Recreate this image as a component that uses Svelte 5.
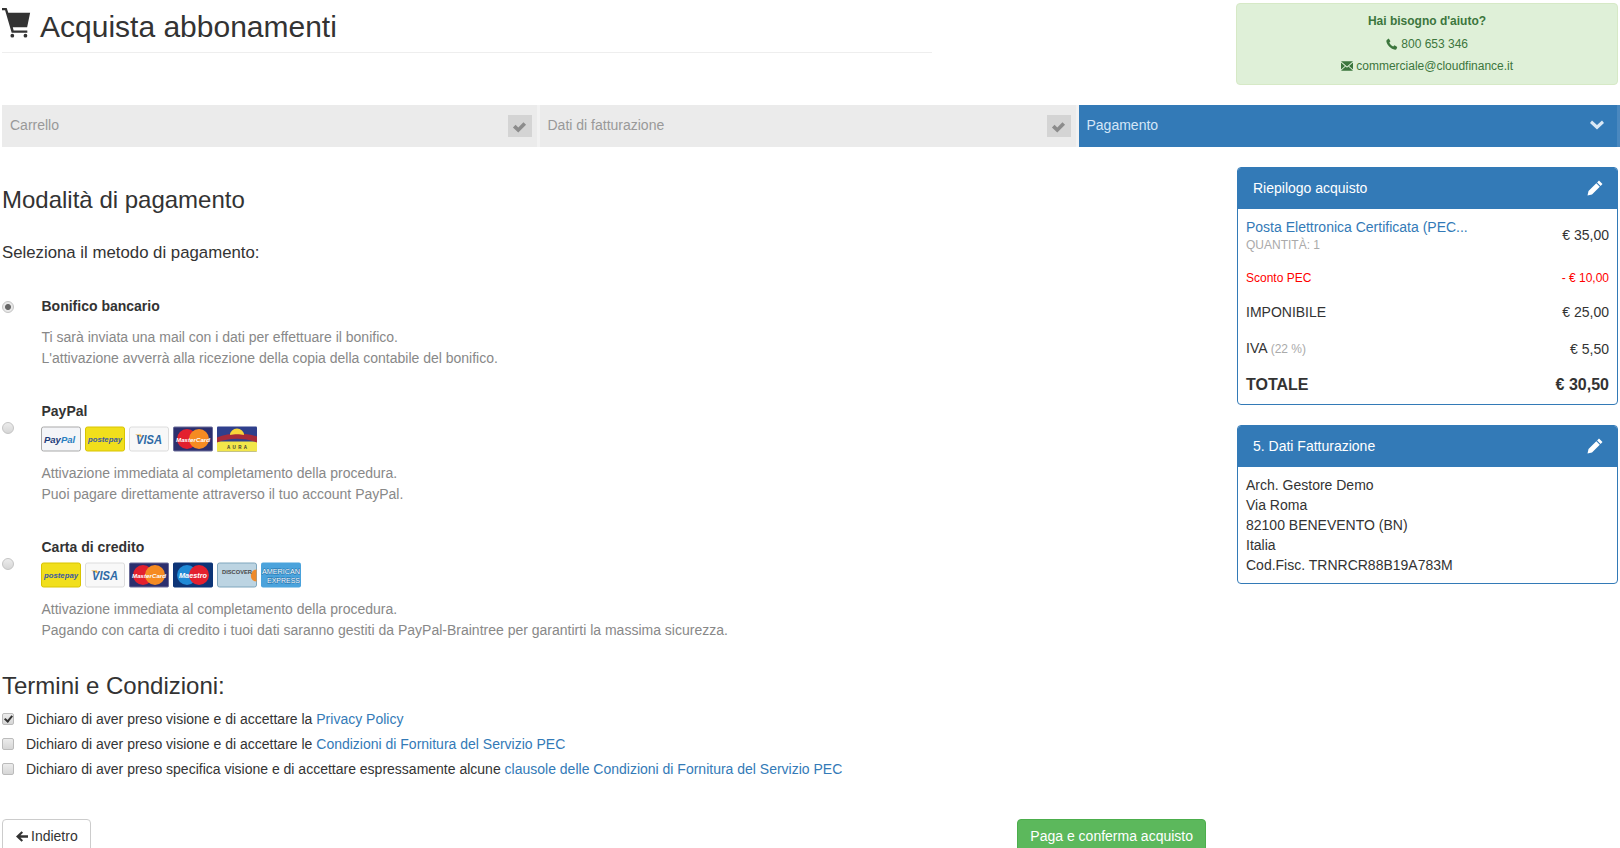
<script>
  const steps = [
    { label: "Carrello", done: true },
    { label: "Dati di fatturazione", done: true },
    { label: "Pagamento", done: false }
  ];

  const methods = [
    {
      name: "Bonifico bancario",
      checked: true,
      cards: [],
      lines: [
        "Ti sarà inviata una mail con i dati per effettuare il bonifico.",
        "L'attivazione avverrà alla ricezione della copia della contabile del bonifico."
      ]
    },
    {
      name: "PayPal",
      checked: false,
      cards: ["paypal", "postepay", "visa", "mastercard", "aura"],
      lines: [
        "Attivazione immediata al completamento della procedura.",
        "Puoi pagare direttamente attraverso il tuo account PayPal."
      ]
    },
    {
      name: "Carta di credito",
      checked: false,
      cards: ["postepay", "visa", "mastercard", "maestro", "discover", "amex"],
      lines: [
        "Attivazione immediata al completamento della procedura.",
        "Pagando con carta di credito i tuoi dati saranno gestiti da PayPal-Braintree per garantirti la massima sicurezza."
      ]
    }
  ];

  const terms = [
    { before: "Dichiaro di aver preso visione e di accettare la ", link: "Privacy Policy", checked: true },
    { before: "Dichiaro di aver preso visione e di accettare le ", link: "Condizioni di Fornitura del Servizio PEC", checked: false },
    { before: "Dichiaro di aver preso specifica visione e di accettare espressamente alcune ", link: "clausole delle Condizioni di Fornitura del Servizio PEC", checked: false }
  ];

  const billing = [
    "Arch. Gestore Demo",
    "Via Roma",
    "82100 BENEVENTO (BN)",
    "Italia",
    "Cod.Fisc. TRNRCR88B19A783M"
  ];
</script>

{#snippet check()}
  <svg class="ico" viewBox="0 0 16 16"><path d="M1 9l2.800-2.800 2.900 2.900 5.500-5.700L15 6.200l-8.300 8.300z" fill="currentColor" /></svg>
{/snippet}

{#snippet pencil()}
  <svg class="pencil" viewBox="0 0 16 16"><path d="M12 .5l3.500 3.500-1.900 1.900-3.500-3.500zM9.300 3.200l3.500 3.500-7.800 7.800-4.500 1 1-4.500z" fill="currentColor" /></svg>
{/snippet}

{#snippet card(kind)}
  <svg class="card" viewBox="0 0 40 25">
    {#if kind === "paypal"}
      <rect x=".5" y=".5" width="39" height="24" rx="2" fill="#f4f5f8" stroke="#a9a9a9" />
      <text x="3" y="16" class="ct" fill="#1d3b78" font-size="9.500">Pay<tspan fill="#2a7fc0">Pal</tspan></text>
    {:else if kind === "postepay"}
      <rect x=".5" y=".5" width="39" height="24" rx="2" fill="#f1df1c" stroke="#d9c400" />
      <text x="3" y="15.500" class="cp" fill="#3c5aa0" font-size="8" textLength="34" lengthAdjust="spacingAndGlyphs">postepay</text>
    {:else if kind === "visa"}
      <rect x=".5" y=".5" width="39" height="24" rx="2" fill="#f8f8f8" stroke="#dcdcdc" />
      <path d="M6 8h6l1 3z" fill="#e8a73a" />
      <text x="7" y="17.500" class="ct" fill="#2f6aa5" font-size="12" textLength="26" lengthAdjust="spacingAndGlyphs">VISA</text>
    {:else if kind === "mastercard"}
      <rect x=".5" y=".5" width="39" height="24" rx="1" fill="#2c2f6e" stroke="#6a6c98" />
      <circle cx="14" cy="12.500" r="10" fill="#e3202e" />
      <circle cx="26" cy="12.500" r="10" fill="#f58b22" />
      <text x="3" y="15" class="ct" fill="#fff" font-size="6.200" textLength="34" lengthAdjust="spacingAndGlyphs">MasterCard</text>
    {:else if kind === "maestro"}
      <rect x=".5" y=".5" width="39" height="24" rx="1" fill="#0d3577" stroke="#0d3577" />
      <circle cx="14" cy="12.500" r="10" fill="#1f8ad6" />
      <circle cx="26" cy="12.500" r="10" fill="#e3202e" />
      <text x="6" y="15.500" class="ct" fill="#fff" font-size="8" textLength="28" lengthAdjust="spacingAndGlyphs">Maestro</text>
    {:else if kind === "aura"}
      <rect width="40" height="25" rx="1" fill="#2f3f8c" />
      <path d="M0 15h40v10H0z" fill="#f2e64a" />
      <path d="M0 16c12-5 28-5 40 0v-6C28 6 12 6 0 11z" fill="#a62b3a" />
      <path d="M13 8.500a7 6.500 0 0 1 14 0c-4-1-10-1-14 0z" fill="#f7d43a" />
      <text x="10" y="22" class="ca" fill="#333" font-size="4.500" textLength="20">AURA</text>
    {:else if kind === "discover"}
      <rect x=".5" y=".5" width="39" height="24" rx="2" fill="#bcd4e2" stroke="#7fa6bd" />
      <path d="M39.500 7c-7 0-8 12 0 12z" fill="#ef8a2a" />
      <text x="5" y="11" class="ca" fill="#4a4a4a" font-size="5" textLength="30" lengthAdjust="spacingAndGlyphs">DISCOVER</text>
    {:else if kind === "amex"}
      <rect width="40" height="25" rx="2" fill="#4ba3dc" />
      <text x="1" y="11" class="cx" fill="#fff" font-size="7" textLength="38" lengthAdjust="spacingAndGlyphs">AMERICAN</text>
      <text x="6" y="20.500" class="cx" fill="#fff" font-size="7" textLength="33" lengthAdjust="spacingAndGlyphs">EXPRESS</text>
    {/if}
  </svg>
{/snippet}

<div class="page">
  <header class="top">
    <h1 class="title">
      <svg class="cart" viewBox="0 0 32 32"><path d="M0 0h5l1.700 5H30l-3.200 15.500H11.500l.9 3.500H27v2.500H10.300L3.300 2.500H0zM11 27.500a2 2 0 1 1 0 4 2 2 0 0 1 0-4zm14 0a2 2 0 1 1 0 4 2 2 0 0 1 0-4z" fill="currentColor" /></svg>
      Acquista abbonamenti
    </h1>
    <aside class="help">
      <strong>Hai bisogno d'aiuto?</strong>
      <span>
        <svg class="tiny" viewBox="0 0 14 14"><path d="M3.200.6l2 3.200-1.300 1.500c.7 2 2.300 3.600 4.500 4.600l1.500-1.300 3.200 2-.8 2.300c-.3.600-1 .9-1.700.8C5.800 12.900 1.200 8.400.4 3.800.300 3 .6 2.300 1.200 1.900z" fill="currentColor" /></svg>
        800 653 346
      </span>
      <span class="mail">
        <svg class="tiny wide" viewBox="0 0 14 11"><path d="M0 0h14L7 6zM0 1.500v8L4.600 5.400zM14 1.500v8L9.400 5.400zM5.400 6.100L7 7.500l1.600-1.400L14 11H0z" fill="currentColor" /></svg>
        commerciale@cloudfinance.it
      </span>
    </aside>
  </header>

  <nav class="steps">
    {#each steps as step}
      <div class="step" class:active={!step.done}>
        <span class="step-label">{step.label}</span>
        {#if step.done}
          <span class="tick">{@render check()}</span>
        {:else}
          <svg class="chev" viewBox="0 0 14 10"><path d="M2 .5l5 4.500 5-4.500 2 2.400-7 6.600-7-6.600z" fill="currentColor" /></svg>
        {/if}
      </div>
    {/each}
  </nav>

  <div class="main">
    <section class="left">
      <h2 class="heading">Modalità di pagamento</h2>
      <p class="lead">Seleziona il metodo di pagamento:</p>

      {#each methods as method}
        <div class="method">
          <input class="radio" type="radio" name="metodo" checked={method.checked} class:low={method.cards.length > 0} />
          <div class="method-body">
            <div class="method-name">{method.name}</div>
            {#if method.cards.length}
              <div class="cards">
                {#each method.cards as kind}
                  {@render card(kind)}
                {/each}
              </div>
            {/if}
            <div class="method-text">
              {#each method.lines as line}
                <div>{line}</div>
              {/each}
            </div>
          </div>
        </div>
      {/each}

      <h2 class="heading terms-title">Termini e Condizioni:</h2>
      {#each terms as term}
        <label class="term">
          <input class="box" type="checkbox" checked={term.checked} />
          <span>{term.before}<a href="#top">{term.link}</a></span>
        </label>
      {/each}

      <div class="actions">
        <button class="btn back">
          <svg class="arrow" viewBox="0 0 14 12"><path d="M6.500 0l1.700 1.700L5.200 4.500H14v3H5.200l3 2.800L6.500 12 0 6z" fill="currentColor" /></svg>
          Indietro
        </button>
        <button class="btn pay">Paga e conferma acquisto</button>
      </div>
    </section>

    <aside class="side">
      <div class="panel">
        <div class="panel-head"><span>Riepilogo acquisto</span>{@render pencil()}</div>
        <div class="summary">
          <div class="row product">
            <div>
              <a class="product-name" href="#top">Posta Elettronica Certificata (PEC...</a>
              <div class="qty">QUANTITÀ: 1</div>
            </div>
            <span class="product-price">€ 35,00</span>
          </div>
          <div class="row discount"><span>Sconto PEC</span><span>- € 10,00</span></div>
          <div class="row taxable"><span>IMPONIBILE</span><span>€ 25,00</span></div>
          <div class="row vat"><span>IVA <small>(22 %)</small></span><span>€ 5,50</span></div>
          <div class="row total"><span>TOTALE</span><span>€ 30,50</span></div>
        </div>
      </div>

      <div class="panel">
        <div class="panel-head"><span>5. Dati Fatturazione</span>{@render pencil()}</div>
        <div class="billing">
          {#each billing as line}
            <div>{line}</div>
          {/each}
        </div>
      </div>
    </aside>
  </div>
</div>

<style>
  :global(body) {
    margin: 0;
    background: #fff;
    overflow: hidden;
  }

  .page {
    height: 848px;
    overflow: hidden;
    padding: 3px 0 0 2px;
    box-sizing: border-box;
    font-family: "Liberation Sans", Arial, sans-serif;
    font-size: 14px;
    line-height: 20px;
    color: #333;
  }

  .top {
    display: flex;
    justify-content: space-between;
    align-items: flex-start;
  }

  .title {
    width: 930px;
    height: 49px;
    margin: 0;
    display: flex;
    align-items: flex-start;
    gap: 8px;
    border-bottom: 1px solid #eee;
    font-size: 30px;
    font-weight: 400;
    line-height: 48px;
  }

  .cart {
    width: 30px;
    height: 30px;
    margin-top: 5px;
    flex: none;
  }

  .help {
    width: 382px;
    height: 82px;
    margin-right: 2px;
    box-sizing: border-box;
    display: flex;
    flex-direction: column;
    align-items: center;
    gap: 2px;
    padding-top: 7px;
    background: #dff0d8;
    border: 1px solid #d6e9c6;
    border-radius: 4px;
    color: #3c763d;
    font-size: 12px;
  }

  .help span {
    margin-top: 1px;
  }

  .help .mail {
    margin-top: 0;
  }

  .tiny {
    width: 12px;
    height: 12px;
    vertical-align: -2px;
  }

  .tiny.wide {
    height: 10px;
    vertical-align: -1px;
  }

  .steps {
    display: flex;
    margin-top: 20px;
    height: 42px;
  }

  .step {
    flex: 0 0 537.500px;
    box-sizing: border-box;
    display: flex;
    align-items: center;
    justify-content: space-between;
    padding: 0 5px 0 8px;
    background: #ebebeb;
    color: #999;
    border-right: 3px solid #f2f2f2;
  }

  .step-label {
    padding-bottom: 2px;
  }

  .step:nth-child(2) {
    flex-basis: 539px;
  }

  .step.active {
    flex: 1 1 0;
    background: #337ab7;
    color: #d3e6f7;
    border-right-color: #4a88bf;
    padding-right: 13px;
  }

  .tick {
    width: 24px;
    height: 22px;
    display: flex;
    align-items: center;
    justify-content: center;
    background: #d4d4d4;
    color: #8c8c8c;
  }

  .ico {
    width: 15px;
    height: 15px;
  }

  .chev {
    width: 14px;
    height: 10px;
    color: #d9e8f5;
    margin-bottom: 3px;
  }

  .main {
    display: flex;
    justify-content: space-between;
    align-items: flex-start;
  }

  .left {
    width: 1204px;
  }

  .heading {
    margin: 0;
    font-size: 24px;
    font-weight: 400;
    line-height: 28px;
    padding-top: 39px;
  }

  .lead {
    margin: 27px 0 0;
    font-size: 16.800px;
    line-height: 24px;
  }

  .method {
    position: relative;
    padding-left: 39.500px;
    margin-top: 31px;
  }

  .method + .method {
    margin-top: 32.500px;
  }

  .radio {
    appearance: none;
    position: absolute;
    left: 0;
    top: 5px;
    margin: 0;
    width: 12px;
    height: 12px;
    border: 1px solid #c4c4c4;
    border-radius: 50%;
    background: linear-gradient(#ececec, #d6d6d6);
    box-sizing: border-box;
  }

  .radio.low {
    top: 21px;
  }

  .radio:checked {
    background: radial-gradient(circle, #666 0 2.500px, #e8e8e8 3.500px);
  }

  .method-name {
    font-weight: 700;
    font-size: 14px;
  }

  .cards {
    display: flex;
    gap: 4px;
    margin: 5px 0 0 -1px;
    height: 26px;
  }

  .card {
    width: 40px;
    height: 26px;
    flex: none;
  }

  .ct {
    font-family: "Liberation Sans", Arial, sans-serif;
    font-weight: 700;
    font-style: italic;
  }

  .cp {
    font-family: "Liberation Sans", Arial, sans-serif;
    font-style: italic;
    font-weight: 700;
  }

  .ca {
    font-family: "Liberation Sans", Arial, sans-serif;
    font-weight: 700;
  }

  .cx {
    font-family: "Liberation Sans", Arial, sans-serif;
    paint-order: stroke;
    stroke: #1f6ea8;
    stroke-width: 0.8px;
  }

  .method-text {
    margin-top: 11px;
    line-height: 20.700px;
    color: #888;
  }

  .terms-title {
    padding-top: 32px;
    margin-bottom: 6px;
  }

  .term {
    display: flex;
    align-items: center;
    gap: 12px;
    height: 25px;
  }

  .box {
    appearance: none;
    margin: 0;
    width: 12px;
    height: 12px;
    flex: none;
    border: 1px solid #bbb;
    border-radius: 2px;
    background: linear-gradient(#ececec, #d6d6d6);
    box-sizing: border-box;
    position: relative;
  }

  .box:checked::after {
    content: "";
    position: absolute;
    left: 3px;
    top: 0;
    width: 3px;
    height: 6px;
    border-right: 2px solid #333;
    border-bottom: 2px solid #333;
    transform: rotate(40deg);
  }

  a {
    color: #337ab7;
    text-decoration: none;
  }

  .actions {
    display: flex;
    justify-content: space-between;
    margin-top: 38px;
  }

  .btn {
    height: 34px;
    padding: 6px 12px;
    font: inherit;
    border-radius: 4px;
    border: 1px solid #ccc;
    background: #fff;
    color: #333;
  }

  .back {
    display: flex;
    align-items: center;
    gap: 3px;
    padding: 6px 12px 6px 13px;
  }

  .arrow {
    width: 12px;
    height: 11px;
  }

  .pay {
    background: #5cb85c;
    border-color: #4cae4c;
    color: #fff;
  }

  .side {
    width: 381px;
    margin-top: 20px;
    margin-right: 2px;
    display: flex;
    flex-direction: column;
    gap: 20px;
    flex: none;
  }

  .panel {
    border: 1px solid #337ab7;
    border-radius: 4px;
    overflow: hidden;
  }

  .panel-head {
    height: 41px;
    box-sizing: border-box;
    display: flex;
    align-items: center;
    justify-content: space-between;
    padding: 0 14px 2px 15px;
    background: #337ab7;
    color: #fff;
  }

  .pencil {
    width: 16px;
    height: 16px;
  }

  .summary {
    padding: 5px 8px 0;
    height: 195px;
    box-sizing: border-box;
  }

  .row {
    display: flex;
    justify-content: space-between;
    align-items: center;
  }

  .product {
    height: 43px;
  }

  .product-name {
    display: block;
    line-height: 18px;
    margin: -1px 0 1px;
  }

  .product-price {
    margin-bottom: 2px;
  }

  .qty {
    font-size: 12px;
    line-height: 16px;
    color: #aaa;
  }

  .discount {
    margin-top: 11px;
    color: #f00;
    font-size: 12px;
  }

  .taxable {
    margin-top: 14px;
  }

  .vat {
    margin-top: 16px;
  }

  small {
    font-size: 12px;
    color: #aaa;
  }

  .total {
    margin-top: 16px;
    font-size: 16px;
    font-weight: 700;
  }

  .billing {
    padding: 8px 8px;
    line-height: 20px;
    height: 116px;
    box-sizing: border-box;
  }
</style>
